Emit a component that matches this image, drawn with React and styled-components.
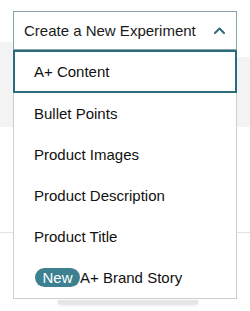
import React from "react";
import styled, { createGlobalStyle, css } from "styled-components";

const GlobalStyle = createGlobalStyle`
  html, body {
    margin: 0;
    padding: 0;
    background: #ffffff;
  }
  body {
    font-family: "Liberation Sans", Arial, sans-serif;
    color: #111111;
  }
`;

const Page = styled.div`
  position: relative;
  width: 250px;
  height: 311px;
  overflow: hidden;
  background: #ffffff;
`;

const Band = styled.div`
  margin-top: 42px;
  height: 85px;
  display: flex;
`;

const BandCell = styled.div`
  flex: 1;
  background: #f3f3f3;

  ${(p) =>
    p.offset &&
    css`
      margin-top: 15px;
    `}
`;

const Divider = styled.div`
  margin-top: 105px;
  height: 1px;
  background: #e3e3e3;
`;

const ButtonShadow = styled.div`
  margin: 67px 0 0 58px;
  width: 140px;
  height: 4px;
  background: #e6e6e6;
  box-shadow: 0 1px 3px rgba(0, 0, 0, 0.15);
  border-radius: 0 0 3px 3px;
`;

const Dropdown = styled.div`
  position: absolute;
  left: 13px;
  top: 11px;
  width: 224px;
  background: #ffffff;
`;

const Header = styled.div`
  box-sizing: border-box;
  height: 39px;
  display: flex;
  align-items: center;
  justify-content: space-between;
  padding: 0 11px 0 10px;
  border: 1px solid #8aa3aa;
  font-size: 15px;
  color: #1a1a1a;
`;

const Menu = styled.ul`
  list-style: none;
  margin: 0;
  padding: 0;
  border: 1px solid #cfcfcf;
  border-top: none;
`;

const Item = styled.li`
  box-sizing: border-box;
  height: 41px;
  display: flex;
  align-items: center;
  padding-left: 20px;
  font-size: 15px;
  color: #111111;

  ${(p) =>
    p.selected &&
    css`
      height: 43px;
      margin: 0 -1px;
      border: 2px solid #2b6b7b;
      padding-left: 19px;
    `}
`;

const Badge = styled.span`
  display: inline-flex;
  align-items: center;
  justify-content: center;
  width: 45px;
  height: 19px;
  margin-left: 1px;
  border-radius: 10px;
  background: #3d8191;
  color: #ffffff;
  font-size: 15px;
`;

const Chevron = () => (
  <svg width="11" height="7" viewBox="0 0 11 7" fill="none">
    <polyline
      points="1,6 5.5,1.5 10,6"
      stroke="#2b6b7b"
      strokeWidth="2"
      strokeLinecap="round"
      strokeLinejoin="round"
    />
  </svg>
);

const options = [
  "A+ Content",
  "Bullet Points",
  "Product Images",
  "Product Description",
  "Product Title",
];

export default function App() {
  return (
    <Page>
      <GlobalStyle />
      <Band>
        <BandCell />
        <BandCell offset />
      </Band>
      <Divider />
      <ButtonShadow />

      <Dropdown>
        <Header>
          <span>Create a New Experiment</span>
          <Chevron />
        </Header>
        <Menu>
          {options.map((name, i) => (
            <Item key={name} selected={i === 0}>
              {name}
            </Item>
          ))}
          <Item>
            <Badge>New</Badge>A+ Brand Story
          </Item>
        </Menu>
      </Dropdown>
    </Page>
  );
}
